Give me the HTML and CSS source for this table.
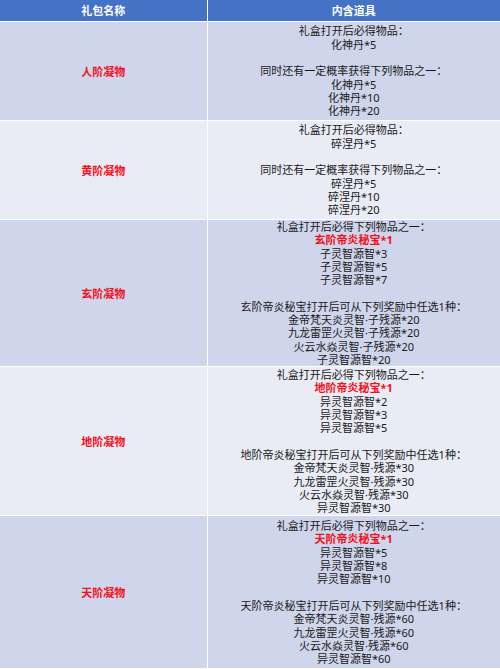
FILE: index.html
```html
<!DOCTYPE html>
<html lang="zh-CN">
<head>
<meta charset="utf-8">
<title>礼包内容</title>
<link rel="stylesheet" href="styles.css">
</head>
<body>
<table class="gift-table">
  <colgroup><col class="col-name"><col class="col-items"></colgroup>
  <thead>
    <tr class="head-row"><th>礼包名称</th><th>内含道具</th></tr>
  </thead>
  <tbody>
    <tr class="row dark r-short">
      <td class="name">人阶凝物</td>
      <td class="items">礼盒打开后必得物品：<br>化神丹*5<br><br>同时还有一定概率获得下列物品之一：<br>化神丹*5<br>化神丹*10<br>化神丹*20</td>
    </tr>
    <tr class="row light r-short">
      <td class="name">黄阶凝物</td>
      <td class="items">礼盒打开后必得物品：<br>碎涅丹*5<br><br>同时还有一定概率获得下列物品之一：<br>碎涅丹*5<br>碎涅丹*10<br>碎涅丹*20</td>
    </tr>
    <tr class="row dark r-long1">
      <td class="name">玄阶凝物</td>
      <td class="items">礼盒打开后必得下列物品之一：<br><span class="hl">玄阶帝炎秘宝*1</span><br>子灵智源智*3<br>子灵智源智*5<br>子灵智源智*7<br><br>玄阶帝炎秘宝打开后可从下列奖励中任选1种：<br>金帝梵天炎灵智·子残源*20<br>九龙雷罡火灵智·子残源*20<br>火云水焱灵智·子残源*20<br>子灵智源智*20</td>
    </tr>
    <tr class="row light r-long2">
      <td class="name">地阶凝物</td>
      <td class="items">礼盒打开后必得下列物品之一：<br><span class="hl">地阶帝炎秘宝*1</span><br>异灵智源智*2<br>异灵智源智*3<br>异灵智源智*5<br><br>地阶帝炎秘宝打开后可从下列奖励中任选1种：<br>金帝梵天炎灵智·残源*30<br>九龙雷罡火灵智·残源*30<br>火云水焱灵智·残源*30<br>异灵智源智*30</td>
    </tr>
    <tr class="row dark r-long3">
      <td class="name">天阶凝物</td>
      <td class="items">礼盒打开后必得下列物品之一：<br><span class="hl">天阶帝炎秘宝*1</span><br>异灵智源智*5<br>异灵智源智*8<br>异灵智源智*10<br><br>天阶帝炎秘宝打开后可从下列奖励中任选1种：<br>金帝梵天炎灵智·残源*60<br>九龙雷罡火灵智·残源*60<br>火云水焱灵智·残源*60<br>异灵智源智*60</td>
    </tr>
  </tbody>
</table>
</body>
</html>
```

FILE: styles.css
```css
html, body {
  margin: 0;
  padding: 0;
  background: #ffffff;
}
body {
  font-family: "Noto Sans", "Noto Sans CJK SC", sans-serif;
  font-size: 11px;
  color: #1a1a1a;
}
.gift-table {
  width: 500px;
  table-layout: fixed;
  border-collapse: collapse;
}
.col-name { width: 207px; }
.col-items { width: 293px; }
.gift-table th,
.gift-table td {
  padding: 0;
  text-align: center;
  vertical-align: middle;
}
.gift-table th + th,
.gift-table td + td {
  border-left: 1.5px solid #ffffff;
}
.head-row th {
  height: 21px;
  background: #4472c4;
  color: #ffffff;
  font-weight: bold;
  font-size: 11px;
  line-height: 13px;
  border-bottom: 1px solid #ffffff;
}
.row td {
  border-bottom: 1px solid #ffffff;
}
.dark td { background: #cfd5ea; }
.light td { background: #e9ebf5; }
.name {
  color: #f50f1c;
  font-weight: bold;
}
.items {
  line-height: 13.3px;
}
.hl {
  color: #f50f1c;
  font-weight: bold;
}
.r-short td { height: 98px; }
.r-long1 td { height: 146px; }
.r-long2 td { height: 148px; }
.r-long3 td { height: 152px; }
```
